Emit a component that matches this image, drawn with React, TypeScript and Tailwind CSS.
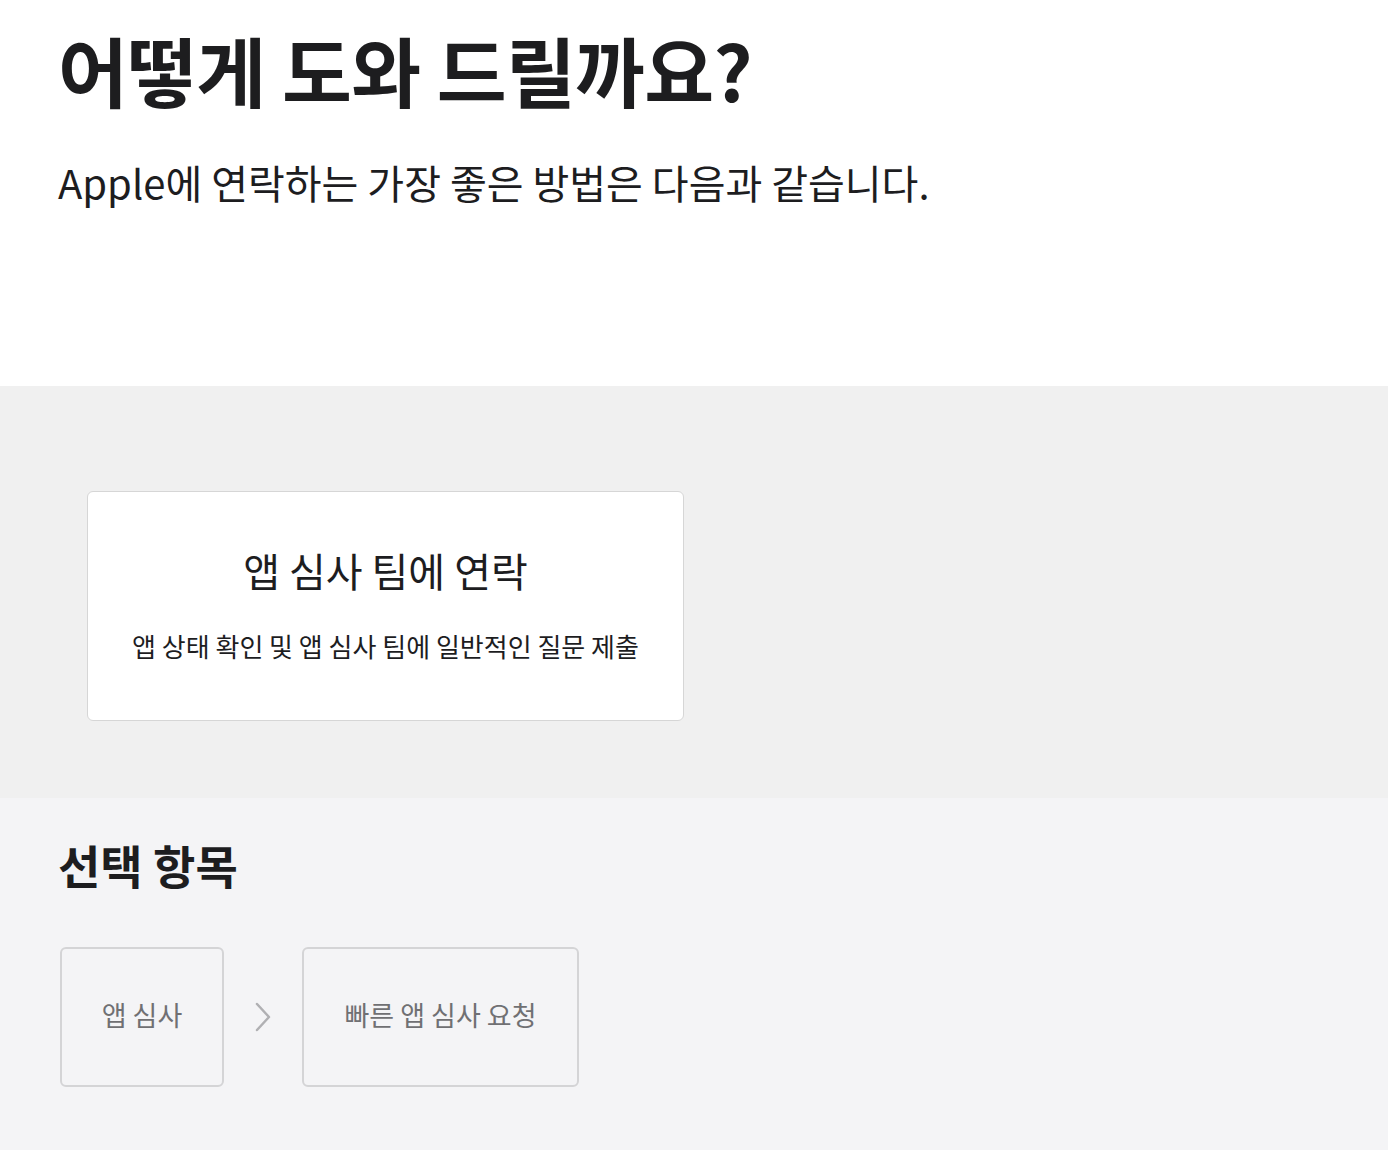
export default function App() {
    const font = { fontFamily: '"Noto Sans CJK KR", "Noto Sans", sans-serif' };
    return (
        <div className="min-h-[1150px] bg-white text-[#1d1d1f]" style={font}>
            {/* Header */}
            <section className="h-[386px] px-[58px] pt-[24px]">
                <h1 className="text-[76px] leading-[90px] font-semibold tracking-[-0.01em]">
                    어떻게 도와 드릴까요?
                </h1>
                <p className="mt-[43px] text-[40px] leading-[50px] font-normal">
                    Apple에 연락하는 가장 좋은 방법은 다음과 같습니다.
                </p>
            </section>

            {/* Contact card */}
            <section className="h-[412px] bg-[#f0f0f0] pl-[87px] pt-[105px]">
                <div className="flex h-[230px] w-[597px] flex-col items-center justify-center rounded-[6px] border border-[#d6d6d6] bg-white pb-[4px]">
                    <h2 className="text-[40px] leading-[48px] font-normal">앱 심사 팀에 연락</h2>
                    <p className="mt-[36px] text-[26px] leading-[32px]">
                        앱 상태 확인 및 앱 심사 팀에 일반적인 질문 제출
                    </p>
                </div>
            </section>

            {/* Selection */}
            <section className="h-[352px] bg-[#f4f4f6] px-[58px] pt-[38px]">
                <h3 className="text-[46px] leading-[56px] font-bold">선택 항목</h3>
                <div className="mt-[55px] flex items-center">
                    <div className="ml-[2px] flex h-[140px] w-[164px] items-center justify-center rounded-[6px] border-2 border-[#d4d4d6] pb-[3px] text-[27px] text-[#707073]">
                        앱 심사
                    </div>
                    <svg className="mx-[30px]" width="18" height="30" viewBox="0 0 18 30" fill="none">
                        <path d="M3 2 L15 15 L3 28" stroke="#b0b0b3" strokeWidth="2.5" strokeLinecap="round" strokeLinejoin="round" />
                    </svg>
                    <div className="flex h-[140px] w-[277px] items-center justify-center rounded-[6px] border-2 border-[#d4d4d6] pb-[3px] text-[27px] text-[#707073]">
                        빠른 앱 심사 요청
                    </div>
                </div>
            </section>
        </div>
    );
}
